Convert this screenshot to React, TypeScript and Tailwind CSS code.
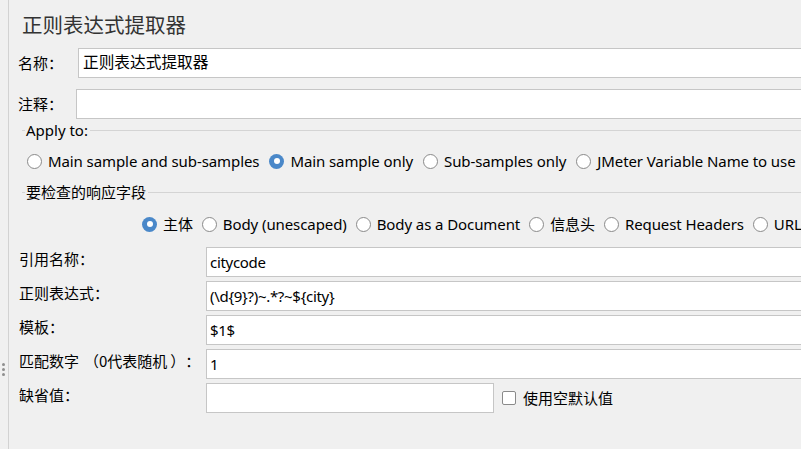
import React from "react";

// JMeter "正则表达式提取器" panel

const Radio = ({ checked, label }: { checked?: boolean; label: string }) => (
  <div className="flex items-center gap-[6px] shrink-0">
    {checked ? (
      <span className="w-[15px] h-[15px] rounded-full bg-[#4a88c9] flex items-center justify-center">
        <span className="w-[6px] h-[6px] rounded-full bg-white" />
      </span>
    ) : (
      <span className="w-[15px] h-[15px] rounded-full border border-[#8a8a8a] bg-white" />
    )}
    <span className="whitespace-nowrap tracking-[-0.09px]">{label}</span>
  </div>
);

const GroupTitle = ({ title }: { title: string }) => (
  <div className="flex items-center h-[20px]">
    <div className="ml-[13px] w-[3px] h-px bg-[#d4d4d4]" />
    <span className="pl-[1px] pr-[2px] whitespace-nowrap leading-[20px]">{title}</span>
    <div className="flex-1 h-px bg-[#d4d4d4]" />
  </div>
);

const FieldRow = ({ label, value }: { label: React.ReactNode; value?: string }) => (
  <div className="flex h-[30px]">
    <div className="w-[197px] shrink-0 pl-[10px] leading-[24px] whitespace-nowrap font-['Noto_Sans_CJK_SC',sans-serif]">
      {label}
    </div>
    <div className="flex-1 border border-[#c6c6c6] bg-white pl-[3px] flex items-center tracking-[-0.3px]">
      {value}
    </div>
  </div>
);

export default function App() {
  return (
    <div className="w-[801px] h-[449px] overflow-hidden bg-[#f0f0f0] flex text-[15px] text-black font-['Noto_Sans','Noto_Sans_CJK_SC',sans-serif] [text-spacing-trim:space-all]">
      {/* splitter */}
      <div className="w-[8px] shrink-0 flex flex-col items-center pt-[363px] gap-[2px] pr-[2px]">
        <span className="w-[3px] h-[3px] rounded-full bg-[#8e8e8e]" />
        <span className="w-[3px] h-[3px] rounded-full bg-[#8e8e8e]" />
        <span className="w-[3px] h-[3px] rounded-full bg-[#8e8e8e]" />
      </div>
      <div className="w-px shrink-0 bg-[#d2d2d2]" />

      <div className="w-[830px] shrink-0 flex flex-col">
        <div className="mt-[11px] pl-[13px] text-[20.5px] leading-[28px] text-[#333] whitespace-nowrap">
          正则表达式提取器
        </div>

        <div className="mt-[9px] flex items-center h-[30px]">
          <div className="w-[69px] shrink-0 pl-[9px] font-['Noto_Sans_CJK_SC',sans-serif]">名称：</div>
          <div className="flex-1 h-full border border-[#c6c6c6] bg-white pl-[4px] flex items-center text-[15.7px]">
            正则表达式提取器
          </div>
        </div>

        <div className="mt-[11px] flex items-center h-[30px]">
          <div className="w-[67px] shrink-0 pl-[9px] font-['Noto_Sans_CJK_SC',sans-serif]">注释：</div>
          <div className="flex-1 h-full border border-[#c6c6c6] bg-white" />
        </div>

        <div className="mt-[1px]">
          <GroupTitle title="Apply to:" />
        </div>
        <div className="mt-[11px] h-[20px] flex items-center gap-[10px] pl-[18px]">
          <Radio label="Main sample and sub-samples" />
          <Radio checked label="Main sample only" />
          <Radio label="Sub-samples only" />
          <Radio label="JMeter Variable Name to use" />
        </div>

        <div className="mt-[11px]">
          <GroupTitle title="要检查的响应字段" />
        </div>
        <div className="mt-[12px] h-[20px] flex items-center gap-[9px] pl-[133px]">
          <Radio checked label="主体" />
          <Radio label="Body (unescaped)" />
          <Radio label="Body as a Document" />
          <Radio label="信息头" />
          <Radio label="Request Headers" />
          <Radio label="URL" />
        </div>

        <div className="mt-[13px] flex flex-col gap-[4px]">
          <FieldRow label="引用名称：" value="citycode" />
          <FieldRow label="正则表达式：" value="(\d{9}?)~.*?~${city}" />
          <FieldRow label="模板：" value="$1$" />
          <FieldRow
            label={
              <>
                匹配数字<span className="inline-block w-[20px] text-right">（</span>0代表随机
                <span className="inline-block w-[18px] pl-[3px]">）</span>
                <span className="inline-block w-[15px]">：</span>
              </>
            }
            value="1"
          />
          <div className="flex h-[30px]">
            <div className="w-[197px] shrink-0 pl-[10px] leading-[24px] font-['Noto_Sans_CJK_SC',sans-serif]">缺省值：</div>
            <div className="w-[288px] shrink-0 border border-[#c6c6c6] bg-white" />
            <div className="ml-[8px] flex items-center gap-[7px]">
              <span className="w-[14px] h-[14px] rounded-[2px] border border-[#8a8a8a] bg-white" />
              <span className="whitespace-nowrap">使用空默认值</span>
            </div>
          </div>
        </div>
      </div>
    </div>
  );
}
